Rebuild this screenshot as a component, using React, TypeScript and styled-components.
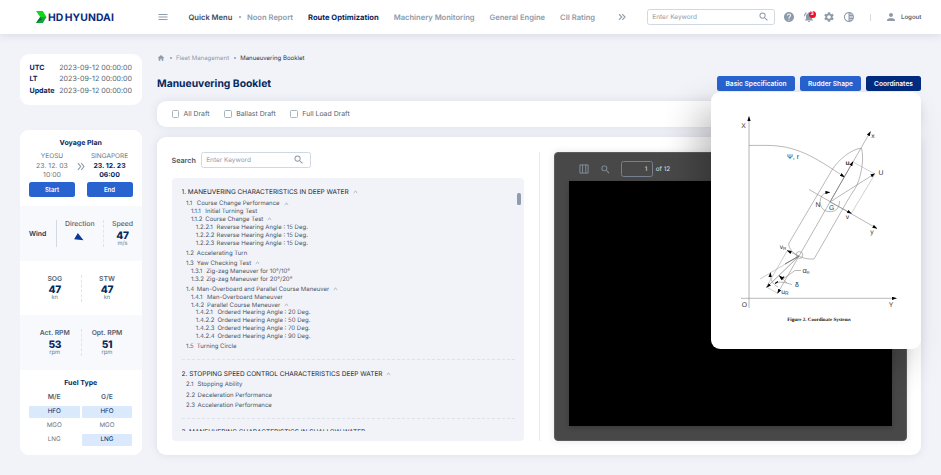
import React from 'react';
import styled, { createGlobalStyle, css } from 'styled-components';
import {
  MdHelp,
  MdNotificationsActive,
  MdSettings,
  MdTonality,
  MdPerson,
  MdSearch,
  MdHome,
  MdMenu,
} from 'react-icons/md';

const GlobalStyle = createGlobalStyle`
  * { box-sizing: border-box; }
  body {
    margin: 0;
    background: #f2f3f9;
    font-family: Inter, sans-serif;
    text-rendering: geometricPrecision;
    -webkit-font-smoothing: antialiased;
    overflow: hidden;
  }
`;

const navy = '#06285c';
const slate = '#556270';
const muted = '#8e9bab';
const blue = '#2863d0';

const Page = styled.div`
  width: 941px;
  height: 475px;
  display: flex;
  flex-direction: column;
  white-space: nowrap;
`;

/* ---------- Header ---------- */

const Header = styled.header`
  height: 34px;
  flex: none;
  display: flex;
  align-items: center;
  padding: 0 19.5px 0 36px;
  background: #fff;
  box-shadow: 0 1px 8px rgba(60, 70, 110, 0.16);
`;

const Logo = styled.div`
  width: 122px;
  display: flex;
  align-items: center;
  gap: 1.5px;
  font-size: 10.4px;
  font-weight: 700;
  letter-spacing: 0.08px;
  word-spacing: -1.2px;
  color: #0b2a7c;
`;

const MenuIcon = styled(MdMenu)`
  width: 12px;
  height: 12px;
  margin-left: -1.5px;
  color: ${muted};
`;

const Nav = styled.nav`
  margin-left: 20px;
  width: 429px;
  display: flex;
  align-items: center;
  gap: 15px;
  font-size: 7.58px;
`;

const NavItem = styled.span<{ $tone?: 'dark' | 'active' }>`
  font-weight: ${(p) => (p.$tone === 'active' ? 700 : 600)};
  color: ${(p) => (p.$tone === 'active' ? navy : p.$tone === 'dark' ? '#3f4b59' : muted)};
`;

const Bullet = styled.i<{ $m?: string }>`
  width: 2px;
  height: 2px;
  border-radius: 1px;
  background: ${muted};
  margin: ${(p) => p.$m ?? '0'};
`;

const Chevrons = styled.svg`
  flex: none;
  fill: none;
  stroke: ${muted};
  stroke-width: 1.1;
`;

const SearchField = styled.div<{ $w: number; $h: number }>`
  width: ${(p) => p.$w}px;
  height: ${(p) => p.$h}px;
  flex: none;
  display: flex;
  align-items: center;
  justify-content: space-between;
  padding: 0 5px 0 4.3px;
  border: 1px solid #d0d8e2;
  border-radius: 2.5px;
  background: #fff;
  font-size: 6.5px;
  color: ${muted};
  svg {
    width: 11.5px;
    height: 11.5px;
  }
`;

const HeaderSearch = styled(SearchField)`
  margin-left: 21.5px;
`;

const HeaderIcons = styled.div`
  display: flex;
  align-items: center;
  margin-left: 8px;
  gap: 8.1px;
  color: ${muted};
  > svg,
  > span > svg {
    display: block;
    width: 12px;
    height: 12px;
  }
`;

const Bell = styled.span`
  position: relative;
`;

const Badge = styled.b`
  position: absolute;
  top: -0.5px;
  right: -0.5px;
  width: 7px;
  height: 7px;
  border-radius: 50%;
  background: #ee1020;
  color: #fff;
  font-size: 5px;
  line-height: 7px;
  text-align: center;
`;

const HeaderRule = styled.i`
  width: 1px;
  height: 7px;
  margin-left: 14.5px;
  background: #d5dbe3;
`;

const Account = styled.div`
  margin-left: auto;
  display: flex;
  align-items: center;
  gap: 4px;
  color: ${slate};
  font-size: 6.1px;
  font-weight: 600;
  svg {
    width: 12px;
    height: 12px;
    color: ${muted};
  }
`;

/* ---------- Layout ---------- */

const Body = styled.div`
  flex: 1;
  min-height: 0;
  display: flex;
  gap: 15px;
  padding: 20px 20px 20px;
`;

const Sidebar = styled.aside`
  width: 122px;
  display: flex;
  flex-direction: column;
  gap: 24.5px;
`;

const Main = styled.main`
  flex: 1;
  min-width: 0;
  display: flex;
  flex-direction: column;
`;

const panel = css`
  background: #fff;
  border-radius: 9px;
`;

/* ---------- Sidebar ---------- */

const ClockCard = styled.div`
  ${panel}
  height: 51px;
  padding: 8.2px 10px 0 9.5px;
`;

const ClockRow = styled.div`
  display: flex;
  justify-content: space-between;
  line-height: 11.3px;
  font-size: 7.1px;
  color: ${slate};
  letter-spacing: -0.02px;
  b {
    color: ${navy};
    font-size: 7.1px;
  }
`;

const StatusCard = styled.div`
  ${panel}
  flex: 1;
  overflow: hidden;
`;

const Section = styled.section<{ $h: number; $tint?: boolean; $pt: number }>`
  height: ${(p) => p.$h}px;
  padding: ${(p) => p.$pt}px 9.5px 0 9px;
  background: ${(p) => (p.$tint ? '#f8f9fc' : '#fff')};
`;

const SectionTitle = styled.h3`
  margin: 0;
  font-size: 7px;
  line-height: 10px;
  font-weight: 700;
  text-align: center;
  color: ${navy};
`;

const Ports = styled.div`
  display: flex;
  justify-content: space-between;
  margin-top: 4px;
`;

const Port = styled.div<{ $strong?: boolean }>`
  width: 46px;
  display: flex;
  flex-direction: column;
  align-items: center;
  font-size: 6.9px;
  line-height: 8.5px;
  font-weight: ${(p) => (p.$strong ? 700 : 400)};
  color: ${(p) => (p.$strong ? navy : '#6b7784')};
`;

const PortName = styled.span`
  font-size: 6.5px;
  line-height: 9px;
  margin-bottom: 1px;
  font-weight: 400;
  color: #6b7784;
`;

const PortButton = styled.button`
  width: 46px;
  height: 15px;
  margin-top: 2.5px;
  padding: 0;
  border: 0;
  border-radius: 2.5px;
  background: ${blue};
  color: #fff;
  font: 600 6px Inter, sans-serif;
`;

const PortArrow = styled(Chevrons)`
  margin-top: 9.5px;
`;

const WindGrid = styled.div`
  display: grid;
  grid-template-columns: 26.5px 47.5px 1fr;
  height: 27px;
`;

const MetricPair = styled.div`
  display: grid;
  grid-template-columns: 51.5px 1fr;
  height: 27px;
`;

const Metric = styled.div<{ $rule?: 'solid' | 'dashed'; $shift?: number }>`
  display: flex;
  flex-direction: column;
  align-items: center;
  padding-left: ${(p) => p.$shift ?? 0}px;
  border-left: ${(p) => (p.$rule ? `1px ${p.$rule} ${p.$rule === 'solid' ? '#d3d9e0' : '#dfe3ea'}` : '0')};
`;

const WindLabel = styled.b`
  align-self: center;
  font-size: 6.9px;
  font-weight: 600;
  color: #2a3440;
`;

const MetricLabel = styled.span`
  font-size: 6.8px;
  line-height: 8.5px;
  font-weight: 600;
  color: ${slate};
`;

const WindMetricLabel = styled(MetricLabel)`
  font-weight: 500;
  font-size: 6.9px;
`;

const MetricValue = styled.b`
  font-size: 10.2px;
  font-weight: 800;
  line-height: 10px;
  margin-top: 2.4px;
  letter-spacing: -0.3px;
  color: ${navy};
`;

const WindValue = styled(MetricValue)`
  margin-top: 2.8px;
`;

const Unit = styled.span`
  font-size: 5.8px;
  line-height: 5px;
  color: #6b7784;
`;

const WindArrow = styled.svg`
  margin: 4.5px 2px 0 0;
`;

const FuelGrid = styled.div`
  display: grid;
  grid-template-columns: 50.5px 50px;
  column-gap: 2.5px;
  row-gap: 2.6px;
  margin-top: 3px;
`;

const FuelHead = styled.span`
  font-size: 6.8px;
  line-height: 12px;
  font-weight: 600;
  text-align: center;
  color: ${slate};
`;

const FuelCell = styled.span<{ $on?: boolean }>`
  font-size: 6.3px;
  line-height: 11.7px;
  text-align: center;
  border-radius: 1px;
  color: ${(p) => (p.$on ? navy : '#6b7784')};
  background: ${(p) => (p.$on ? '#dbe9fd' : 'transparent')};
`;

/* ---------- Main ---------- */

const Breadcrumb = styled.div`
  display: flex;
  align-items: center;
  height: 8px;
  font-size: 6.05px;
  color: ${muted};
  b {
    font-weight: 400;
    color: #2a3440;
  }
  svg {
    width: 8px;
    height: 8px;
  }
`;

const TitleRow = styled.div`
  position: relative;
  display: flex;
  align-items: center;
  justify-content: space-between;
  height: 15px;
  margin: 14.3px 0 9.7px;
`;

const Title = styled.h1`
  margin: 0;
  font-size: 10.35px;
  font-weight: 700;
  color: ${navy};
`;

const Tabs = styled.div`
  display: flex;
  gap: 5px;
`;

const Tab = styled.button<{ $w: number; $active?: boolean }>`
  width: ${(p) => p.$w}px;
  height: 15px;
  padding: 0;
  border: 0;
  border-radius: 2.5px;
  background: ${(p) => (p.$active ? '#002c80' : blue)};
  color: #fff;
  font: 600 6.6px Inter, sans-serif;
`;

const DraftBar = styled.div`
  ${panel}
  height: 26px;
  display: flex;
  align-items: center;
  gap: 14.7px;
  padding-left: 14.5px;
  box-shadow: 0 0 9px rgba(60, 70, 110, 0.12);
`;

const Check = styled.label`
  display: flex;
  align-items: center;
  gap: 4.5px;
  font-size: 6.9px;
  color: ${slate};
  i {
    width: 7.5px;
    height: 7.5px;
    border: 1px solid #a9b4c1;
    border-radius: 1.5px;
  }
`;

const Content = styled.div`
  ${panel}
  flex: 1;
  min-height: 0;
  margin-top: 10px;
  display: flex;
  padding: 15px 14px 14.5px 14.5px;
  box-shadow: 0 0 9px rgba(60, 70, 110, 0.12);
`;

const Booklet = styled.div`
  width: 368.5px;
  flex: none;
  padding-right: 15.5px;
  border-right: 1px solid #e9ebef;
  display: flex;
  flex-direction: column;
`;

const BookletSearch = styled.div`
  display: flex;
  align-items: center;
  gap: 5px;
  font-size: 7.2px;
  font-weight: 600;
  color: #4a5664;
  > div {
    font-weight: 400;
  }
`;

const TreeBox = styled.div`
  flex: 1;
  min-height: 0;
  margin-top: 10px;
  padding: 9px 3px 10px 10px;
  display: flex;
  justify-content: space-between;
  border-radius: 4px;
  background: #f2f3f9;
`;

const Tree = styled.div`
  width: 333px;
  overflow: hidden;
`;

const ScrollThumb = styled.i`
  width: 4px;
  height: 12px;
  margin: 6px -0.5px 0 0;
  border-radius: 1.5px;
  background: #8f9db0;
`;

const Chapter = styled.section`
  padding-bottom: 8.6px;
  margin-bottom: 8.4px;
  border-bottom: 1px dashed #dde1e8;
`;

const ChapterTitle = styled.div`
  display: flex;
  align-items: center;
  height: 10px;
  font-size: 6.49px;
  color: #20272f;
  svg {
    margin-left: 4px;
  }
`;

const TreeRow = styled.div<{ $level: number }>`
  display: flex;
  align-items: center;
  height: 7.85px;
  margin-top: ${(p) => (p.$level === 1 ? 2.4 : 0)}px;
  padding-left: ${(p) => p.$level * 4.9 - 0.4}px;
  font-size: 6.03px;
  color: #4a5564;
  svg {
    margin-left: 4px;
  }
`;

const TreeNumber = styled.span<{ $w: number }>`
  width: ${(p) => p.$w}px;
`;

/* ---------- Viewer ---------- */

const Viewer = styled.div`
  flex: 1;
  margin-left: 13.8px;
  padding: 0 14px 14px;
  display: flex;
  flex-direction: column;
  border: 1px solid #5c5c5c;
  border-radius: 4px;
  background: #484848;
  box-shadow: 0 0 7px rgba(60, 70, 110, 0.14);
`;

const ViewerBar = styled.div`
  height: 28px;
  flex: none;
  display: flex;
  align-items: center;
  padding: 5px 0 0 10.5px;
  font-size: 6.3px;
  color: #e2e2e2;
  svg {
    flex: none;
    color: #8694a4;
  }
`;

const ViewerSearch = styled(MdSearch)`
  width: 11px;
  height: 11px;
  margin-left: 10.5px;
`;

const PageInput = styled.div`
  width: 32px;
  height: 16px;
  margin: 0 2.5px 0 10.5px;
  padding-right: 5px;
  border: 1px solid #75818e;
  border-radius: 2.5px;
  line-height: 14px;
  text-align: right;
`;

const Paper = styled.div`
  flex: 1;
  background: #000;
  box-shadow: 0 2px 5px rgba(0, 0, 0, 0.2);
`;

const Popup = styled.div`
  position: absolute;
  top: 15.5px;
  right: 0;
  width: 210px;
  height: 257.5px;
  border-radius: 9px;
  background: #fff;
  box-shadow: -14px 16px 34px rgba(0, 0, 0, 0.24);
  svg {
    display: block;
  }
`;

const Caret = () => (
  <svg width="5" height="4" viewBox="0 0 5 4" fill="none" stroke="#8e9bab" strokeWidth="0.8">
    <path d="M.8 2.7 2.5 1.2 4.2 2.7" />
  </svg>
);

type Item = [level: number, num: string, numWidth: number, text: string, open?: boolean];

const chapterOne: Item[] = [
  [1, '1.1', 10.8, 'Course Change Performance', true],
  [2, '1.1.1', 14.4, 'Initial Turning Test'],
  [2, '1.1.2', 14.4, 'Course Change Test', true],
  [3, '1.2.2.1', 20.8, 'Reverse Hearing Angle : 15 Deg.'],
  [3, '1.2.2.2', 20.8, 'Reverse Hearing Angle : 15 Deg.'],
  [3, '1.2.2.3', 20.8, 'Reverse Hearing Angle : 15 Deg.'],
  [1, '1.2', 10.8, 'Accelerating Turn'],
  [1, '1.3', 10.8, 'Yaw Checking Test', true],
  [2, '1.3.1', 15.4, 'Zig-zag Maneuver for 10°/10°'],
  [2, '1.3.2', 15.4, 'Zig-zag Maneuver for 20°/20°'],
  [1, '1.4', 10.8, 'Man-Overboard and Parallel Course Maneuver', true],
  [2, '1.4.1', 16.2, 'Man-Overboard Maneuver'],
  [2, '1.4.2', 16.2, 'Parallel Course Meneuver', true],
  [3, '1.4.2.1', 21.6, 'Ordered Hearing Angle : 20 Deg.'],
  [3, '1.4.2.2', 21.6, 'Ordered Hearing Angle : 50 Deg.'],
  [3, '1.4.2.3', 21.6, 'Ordered Hearing Angle : 70 Deg.'],
  [3, '1.4.2.4', 21.6, 'Ordered Hearing Angle : 90 Deg.'],
  [1, '1.5', 10.8, 'Turning Circle'],
];

const chapterTwo: Item[] = [
  [1, '2.1', 11.6, 'Stopping Ability'],
  [1, '2.2', 11.6, 'Deceleration Performance'],
  [1, '2.3', 11.6, 'Acceleration Performance'],
];

const Rows = ({ items }: { items: Item[] }) => (
  <>
    {items.map(([level, num, w, text, open]) => (
      <TreeRow key={num} $level={level}>
        <TreeNumber $w={w}>{num}</TreeNumber>
        {text}
        {open && <Caret />}
      </TreeRow>
    ))}
  </>
);

const Diagram = () => (
  <svg width="210" height="257.5" viewBox="711 92 210 257.5" fill="none" stroke="#8a8a8a" strokeWidth="0.6">
    <defs>
      <marker id="tip" viewBox="0 0 6 4" refX="5.5" refY="2" markerWidth="5" markerHeight="3.6" markerUnits="userSpaceOnUse" orient="auto">
        <path d="M0 0 6 2 0 4z" fill="#000" stroke="none" />
      </marker>
    </defs>
    <g markerEnd="url(#tip)">
      <path d="M749 308V116.5" stroke="#aaa" strokeWidth="0.9" />
      <path d="M741 298.3H896.5" />
      <path d="M749 145.4H766C796 145.400 813 156 844.500 177" />
      <path d="M830 202 870.500 131.500" />
      <path d="M830 202 853 161.500" stroke="#666" />
      <path d="M830 202 875 173.500" />
      <path d="M809 189.500 877 228.500" />
      <path d="M830 202 851.500 213.500" />
      <path d="M799 256 787 250.500" />
      <path d="M799 256 766.500 287.500" stroke="#666" />
      <path d="M830 202 777.500 293.500" />
      <path d="M778 287C772 284 770 279 770.500 272.500" />
      <path d="M787 283 779 275.500" />
      <path d="M839.500 201C839.500 209 835 211.700 830 211.700C822 211.700 819 205 820.500 199C821.500 195 824 192.500 830 192.300" />
    </g>
    <path d="M861.500 148.300C852 148.500 838 160 832 170L789 243C787 248 797 260 814 259L845 205C851 194 854 191 857 185C862 173 864 158 861.500 148.300" />
    <path d="M853 162 875 174 851.500 213" stroke="#b0b0b0" />
    <path d="M799 256 760 279M787 251 766.500 287 778 293.500" stroke="#aaa" />
    <path d="M799 256 785 264" stroke="#777" strokeWidth="1" />
    <circle cx="799.500" cy="255" r="3.400" />
    <path d="M801 270.500H795L783 279M792 284.500C786 283 782 281 776 283" />
    <path d="M784 276.500l-2.500 3.500M778 281.500l-3 2" stroke="#000" strokeWidth="1.100" />
    <g fill="#333" stroke="none" fontFamily="Liberation Sans, sans-serif" fontSize="6.800" textAnchor="middle">
      <text x="743.500" y="127.500">X</text>
      <text x="873" y="138">x</text>
      <text x="847.500" y="165" fontWeight="700">u</text>
      <text x="881" y="174.800">U</text>
      <text x="793" y="159.300" fontSize="7">Ψ, r</text>
      <text x="818" y="207.200">N</text>
      <text x="831.700" y="209.500">G</text>
      <text x="847.500" y="219">v</text>
      <text x="872" y="233.500">y</text>
      <text x="783" y="249">v<tspan fontSize="4.500" dy="1.300">R</tspan></text>
      <text x="806" y="273" fontSize="7.500">α<tspan fontSize="4" dy="0.500">R</tspan></text>
      <text x="797" y="287.300">δ</text>
      <text x="785" y="293.500">u<tspan fontSize="5" dy="1.500">R</tspan></text>
      <text x="744.500" y="307.300">O</text>
      <text x="891" y="307">Y</text>
    </g>
    <text x="819" y="321" fill="#111" stroke="none" fontFamily="Liberation Serif, serif" fontWeight="700" fontSize="5.050" textAnchor="middle">
      Figure 2. Coordinate Systems
    </text>
  </svg>
);

const DoubleChevron = () => (
  <Chevrons width="8" height="8" viewBox="0 0 8 8">
    <path d="M1 1.200 3.700 4 1 6.800M4.300 1.200 7 4 4.300 6.800" />
  </Chevrons>
);

export default function App() {
  return (
    <Page>
      <GlobalStyle />
      <Header>
        <Logo>
          <svg width="10.500" height="12" viewBox="0 0 10.5 12">
            <path d="M0 0h6.800l3.700 6H4.200z" fill="#12d61c" />
            <path d="M4.200 6h6.300l-3.700 6H0z" fill="#0fa63a" />
            <path d="M4.200 6 6 8.500 0 12z" fill="#08743a" />
          </svg>
          HD HYUNDAI
        </Logo>
        <MenuIcon />
        <Nav>
          <NavItem $tone="dark">Quick Menu</NavItem>
          <Bullet $m="0 -8.700px" />
          <NavItem>Noon Report</NavItem>
          <NavItem $tone="active">Route Optimization</NavItem>
          <NavItem>Machinery Monitoring</NavItem>
          <NavItem>General Engine</NavItem>
          <NavItem>CII Rating</NavItem>
        </Nav>
        <DoubleChevron />
        <HeaderSearch $w={128} $h={15.5}>
          Enter Keyword
          <MdSearch />
        </HeaderSearch>
        <HeaderIcons>
          <MdHelp />
          <Bell>
            <MdNotificationsActive />
            <Badge>3</Badge>
          </Bell>
          <MdSettings />
          <MdTonality />
        </HeaderIcons>
        <HeaderRule />
        <Account>
          <MdPerson />
          Logout
        </Account>
      </Header>

      <Body>
        <Sidebar>
          <ClockCard>
            {['UTC', 'LT', 'Update'].map((zone) => (
              <ClockRow key={zone}>
                <b>{zone}</b>
                2023-09-12 00:00:00
              </ClockRow>
            ))}
          </ClockCard>
          <StatusCard>
            <Section $h={76.5} $pt={8.5}>
              <SectionTitle>Voyage Plan</SectionTitle>
              <Ports>
                <Port>
                  <PortName>YEOSU</PortName>
                  <span>23. 12. 03</span>
                  <span>10:00</span>
                  <PortButton>Start</PortButton>
                </Port>
                <PortArrow width="8" height="9" viewBox="0 0 8 9">
                  <path d="M1 1.200 3.700 4.500 1 7.800M4.300 1.200 7 4.500 4.300 7.800" />
                </PortArrow>
                <Port $strong>
                  <PortName>SINGAPORE</PortName>
                  <span>23. 12. 23</span>
                  <span>06:00</span>
                  <PortButton>End</PortButton>
                </Port>
              </Ports>
            </Section>
            <Section $h={54.5} $tint $pt={13.5}>
              <WindGrid>
                <WindLabel>Wind</WindLabel>
                <Metric $rule="solid">
                  <WindMetricLabel>Direction</WindMetricLabel>
                  <WindArrow width="10" height="8" viewBox="0 0 11 9">
                    <path d="M4.200 0 10.500 8.200 0 7z" fill="#0b3796" />
                  </WindArrow>
                </Metric>
                <Metric $rule="dashed" $shift={8}>
                  <WindMetricLabel>Speed</WindMetricLabel>
                  <WindValue>47</WindValue>
                  <Unit>m/s</Unit>
                </Metric>
              </WindGrid>
            </Section>
            <Section $h={54.5} $pt={14}>
              <MetricPair>
                <Metric>
                  <MetricLabel>SOG</MetricLabel>
                  <MetricValue>47</MetricValue>
                  <Unit>kn</Unit>
                </Metric>
                <Metric $rule="dashed">
                  <MetricLabel>STW</MetricLabel>
                  <MetricValue>47</MetricValue>
                  <Unit>kn</Unit>
                </Metric>
              </MetricPair>
            </Section>
            <Section $h={54.5} $tint $pt={14}>
              <MetricPair>
                <Metric>
                  <MetricLabel>Act. RPM</MetricLabel>
                  <MetricValue>53</MetricValue>
                  <Unit>rpm</Unit>
                </Metric>
                <Metric $rule="dashed">
                  <MetricLabel>Opt. RPM</MetricLabel>
                  <MetricValue>51</MetricValue>
                  <Unit>rpm</Unit>
                </Metric>
              </MetricPair>
            </Section>
            <Section $h={86} $pt={8.8}>
              <SectionTitle>Fuel Type</SectionTitle>
              <FuelGrid>
                <FuelHead>M/E</FuelHead>
                <FuelHead>G/E</FuelHead>
                <FuelCell $on>HFO</FuelCell>
                <FuelCell $on>HFO</FuelCell>
                <FuelCell>MGO</FuelCell>
                <FuelCell>MGO</FuelCell>
                <FuelCell>LNG</FuelCell>
                <FuelCell $on>LNG</FuelCell>
              </FuelGrid>
            </Section>
          </StatusCard>
        </Sidebar>

        <Main>
          <Breadcrumb>
            <MdHome />
            <Bullet $m="0 4.500px 0 4.500px" />
            Fleet Management
            <Bullet $m="0 4.500px" />
            <b>Manueuvering Booklet</b>
          </Breadcrumb>
          <TitleRow>
            <Title>Manueuvering Booklet</Title>
            <Tabs>
              <Tab $w={78}>Basic Specification</Tab>
              <Tab $w={61}>Rudder Shape</Tab>
              <Tab $w={55} $active>
                Coordinates
              </Tab>
            </Tabs>
            <Popup>
              <Diagram />
            </Popup>
          </TitleRow>
          <DraftBar>
            {['All Draft', 'Ballast Draft', 'Full Load Draft'].map((draft) => (
              <Check key={draft}>
                <i />
                {draft}
              </Check>
            ))}
          </DraftBar>
          <Content>
            <Booklet>
              <BookletSearch>
                Search
                <SearchField $w={110} $h={16.5}>
                  Enter Keyword
                  <MdSearch />
                </SearchField>
              </BookletSearch>
              <TreeBox>
                <Tree>
                  <Chapter>
                    <ChapterTitle>
                      1. MANEUVERING CHARACTERISTICS IN DEEP WATER
                      <Caret />
                    </ChapterTitle>
                    <Rows items={chapterOne} />
                  </Chapter>
                  <Chapter>
                    <ChapterTitle>
                      2. STOPPING SPEED CONTROL CHARACTERISTICS DEEP WATER
                      <Caret />
                    </ChapterTitle>
                    <Rows items={chapterTwo} />
                  </Chapter>
                  <ChapterTitle>3. MANEUVERING CHARACTERISTICS IN SHALLOW WATER</ChapterTitle>
                </Tree>
                <ScrollThumb />
              </TreeBox>
            </Booklet>
            <Viewer>
              <ViewerBar>
                <svg width="10" height="10" viewBox="0 0 10 10" fill="none" stroke="currentColor" strokeWidth="0.900">
                  <path d="M.9.900h8.200v8.200H.9zM3.600.900v8.200M6.800.900v8.200" />
                </svg>
                <ViewerSearch />
                <PageInput>1</PageInput>
                of 12
              </ViewerBar>
              <Paper />
            </Viewer>
          </Content>
        </Main>
      </Body>
    </Page>
  );
}
